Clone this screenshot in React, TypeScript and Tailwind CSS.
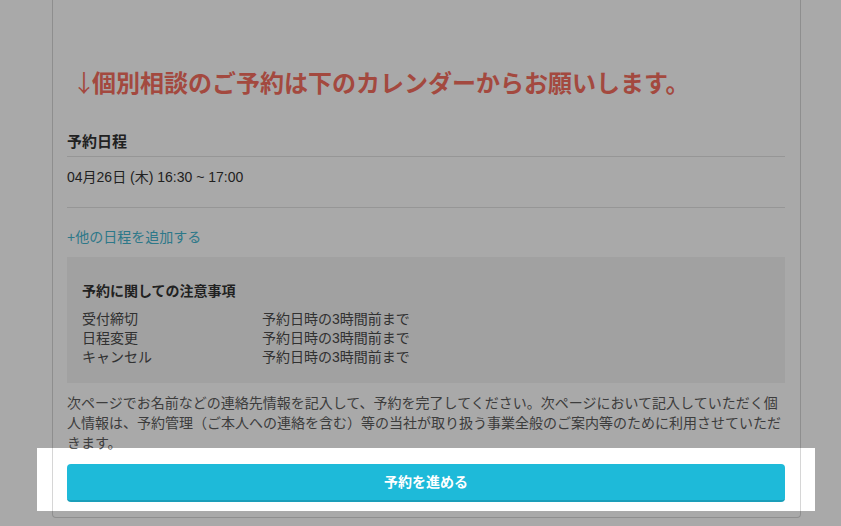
import React from "react";

const jp = { fontFamily: '"Liberation Sans", "Noto Sans CJK JP", sans-serif' };
const cjk = { fontFamily: '"Noto Sans CJK JP", sans-serif' };

export default function App() {
  return (
    <div className="min-h-[526px] w-[841px] overflow-hidden bg-white text-[#333]" style={jp}>
      <div className="ml-[52px] w-[749px] rounded-b-[4px] border-x border-b border-[#d6d6d6] pl-[14px] pr-[15px] pt-[64px] pb-[15px]">
        <div className="pl-[5px] text-[24px] font-bold leading-[36px] text-[#f66f5f] whitespace-nowrap" style={cjk}>
          <span className="font-normal tracking-[-4px]">↓</span>個別相談のご予約は下のカレンダーからお願いします。
        </div>

        <div className="mt-[30px] border-b border-[#e3e3e3] pb-[2px] text-[15px] font-bold leading-[24px] text-[#333]">
          予約日程
        </div>
        <div className="border-b border-[#e3e3e3] pt-[10px] pb-[20px] text-[14px] leading-[20px] text-[#333]">
          04月26日 (木) 16:30 ~ 17:00
        </div>
        <div className="mt-[19px] text-[14px] leading-[20px] text-[#45b6cf]">+他の日程を追加する</div>

        <div className="mt-[10px] bg-[#f3f3f3] px-[15px] pt-[24px] pb-[16px]">
          <div className="text-[14px] font-bold leading-[20px] text-[#333]">予約に関しての注意事項</div>
          <div className="mt-[9px] grid grid-cols-[180px_1fr] text-[14px] leading-[19px] text-[#4a4a4a]">
            <div>受付締切</div>
            <div>予約日時の3時間前まで</div>
            <div>日程変更</div>
            <div>予約日時の3時間前まで</div>
            <div>キャンセル</div>
            <div>予約日時の3時間前まで</div>
          </div>
        </div>

        <p className="mt-[10px] text-[14px] leading-[20px] text-[#5c5c5c]">
          次ページでお名前などの連絡先情報を記入して、予約を完了してください。次ページにおいて記入していただく個人情報は、予約管理（ご本人への連絡を含む）等の当社が取り扱う事業全般のご案内等のために利用させていただきます。
        </p>

        <div className="relative mt-[11px]">
          <div className="pointer-events-none absolute -top-[16px] -bottom-[9px] -left-[30px] -right-[30px] z-10 shadow-[0_0_0_2000px_rgba(0,0,0,0.337)]" />
          <button className="flex h-[38px] w-full items-center justify-center rounded-[4px] border-b-[2px] border-[#1a9fba] bg-[#1ebad9] text-[14px] font-bold text-white">
            予約を進める
          </button>
        </div>
      </div>
    </div>
  );
}
